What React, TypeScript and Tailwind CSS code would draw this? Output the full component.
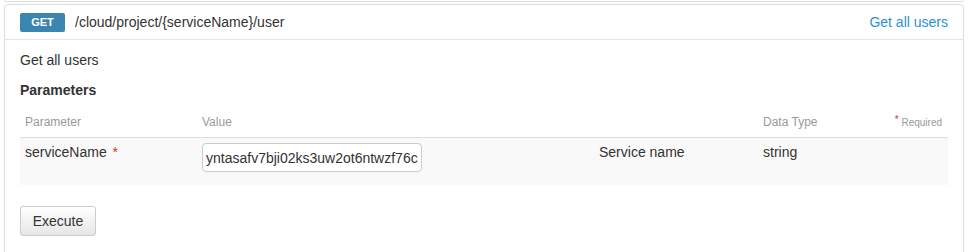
import React from "react";

export default function App() {
  return (
    <div className="w-[975px] h-[252px] overflow-hidden bg-white font-['Liberation_Sans',Arial,sans-serif] text-[#333]">
      <div className="ml-[4px] w-[960px] h-[2px] border-x border-b border-[#ddd] rounded-b-[4px]" />
      <div className="ml-[4px] mt-[2px] w-[960px] h-[260px] border border-[#ddd] rounded-t-[4px]">
        <div className="h-[35px] flex items-center justify-between pl-[15px] pr-[15px] border-b border-[#e5e5e5]">
          <div className="flex items-center">
            <span className="w-[45px] h-[19px] rounded-[2px] bg-[#3b86b0] text-white text-[11px] font-bold flex items-center justify-center">
              GET
            </span>
            <span className="ml-[10px] text-[14px]">/cloud/project/{"{serviceName}"}/user</span>
          </div>
          <a className="text-[14px] text-[#2a92d3] cursor-pointer">Get all users</a>
        </div>
        <div className="px-[15px] pt-[10px]">
          <div className="text-[14px] leading-[20px]">Get all users</div>
          <div className="mt-[10px] text-[14px] leading-[20px] font-bold">Parameters</div>
          <div className="mt-[8px] flex pt-[6px] pb-[6px] border-b border-[#ddd] text-[12px] leading-[17px] text-[#999]">
            <div className="w-[177px] pl-[5px]">Parameter</div>
            <div className="w-[397px] pl-[5px]">Value</div>
            <div className="w-[164px] pl-[5px]" />
            <div className="w-[100px] pl-[5px]">Data Type</div>
            <div className="flex-1 pr-[6px] text-right text-[10px] leading-[17px]">
              <span className="text-[#d9322b] align-top leading-[12px]">*</span> Required
            </div>
          </div>
          <div className="flex bg-[#f9f9f9] pt-[4px] pb-[13px] text-[14px] leading-[20px] items-start">
            <div className="w-[177px] pl-[5px]">
              serviceName <span className="ml-[2px] text-[#d9322b]">*</span>
            </div>
            <div className="w-[397px] pl-[5px]">
              <input
                className="mt-[1px] w-[220px] h-[29px] border border-[#ccc] rounded-[4px] bg-white px-[3px] text-[14px] text-[#333] outline-none"
                defaultValue="yntasafv7bji02ks3uw2ot6ntwzf76cq4"
              />
            </div>
            <div className="w-[164px] pl-[5px]">Service name</div>
            <div className="w-[100px] pl-[5px]">string</div>
            <div className="flex-1" />
          </div>
          <button
            type="button"
            className="mt-[21px] w-[76px] h-[30px] rounded-[3px] border border-[#ccc] bg-gradient-to-b from-white to-[#e6e6e6] text-[14px] text-[#333] cursor-pointer"
          >
            Execute
          </button>
        </div>
      </div>
    </div>
  );
}
